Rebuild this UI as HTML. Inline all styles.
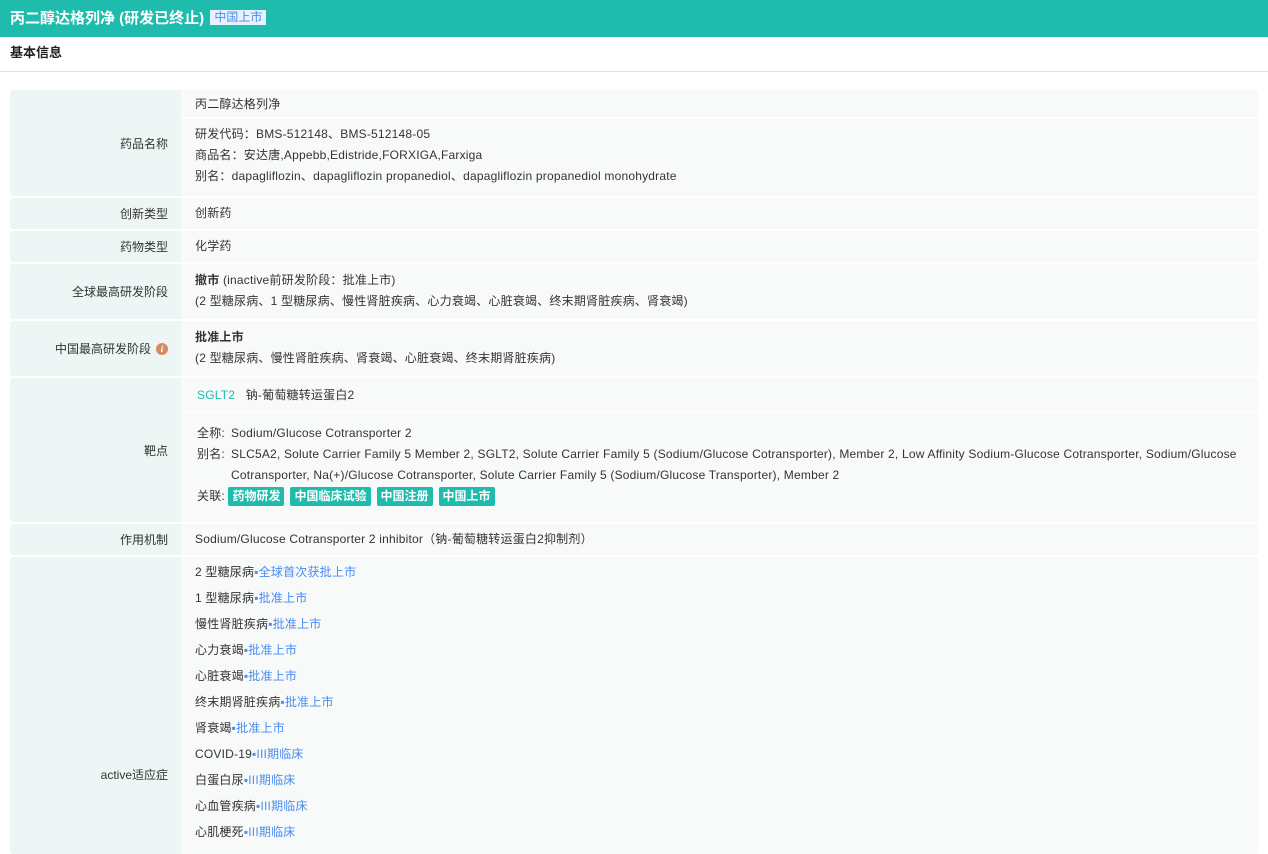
<!DOCTYPE html>
<html><head><meta charset="utf-8"><style>
*{margin:0;padding:0;box-sizing:border-box}
html{height:853px;overflow:hidden}
body{width:1268px;height:853px;overflow:hidden;background:#fff;font-family:"Liberation Sans","Noto Sans CJK SC",sans-serif;font-size:12px;color:#333}
.hd{height:37px;background:#1fbcae;color:#fff;font-weight:bold;font-size:15px;line-height:37px;padding-left:10px}
.hd .tag{display:inline-block;background:#e8f2ff;color:#4a8cf0;font-size:12px;font-weight:normal;line-height:15px;padding:0 4px;vertical-align:2px;margin-left:2px}
.sub{height:35px;line-height:31px;padding-left:10px;font-weight:bold;font-size:13px;color:#222;border-bottom:1px solid #e3e3e3}
.tb{position:absolute;left:10px;top:90px;width:1248px}
.r{display:flex;margin-bottom:2px;border-radius:3px;overflow:hidden}
.l{width:171px;background:#eef5f5;text-align:right;padding-right:13px;display:flex;align-items:center;justify-content:flex-end;color:#333}
.v{flex:1;background:#f8fafa;padding-left:14px;letter-spacing:.2px}
.ln{line-height:21px}
.g{color:#1fbcae}
.b{color:#4a8cf0}
.bt{display:inline-block;background:#1fbcae;color:#fff;font-weight:bold;padding:0 4px;line-height:19px;border-radius:2px;margin-right:6px;letter-spacing:0}
.i{display:inline-block;width:12px;height:12px;border-radius:50%;background:#d98a5c;color:#fff;font-size:9px;font-style:italic;text-align:center;line-height:12px;margin-left:5px;font-family:"Liberation Serif",serif;font-weight:bold}
</style></head><body>
<div class="hd">丙二醇达格列净 (研发已终止) <span class="tag">中国上市</span></div>
<div class="sub">基本信息</div>
<div class="tb">
<div class="r" style="height:106px"><div class="l">药品名称</div><div class="v" style="padding-left:0"><div style="height:29px;line-height:29px;padding-left:14px;border-bottom:2px solid #fff">丙二醇达格列净</div><div style="padding:5px 0 0 14px"><div class="ln">研发代码：BMS-512148、BMS-512148-05</div><div class="ln">商品名：安达唐,Appebb,Edistride,FORXIGA,Farxiga</div><div class="ln">别名：dapagliflozin、dapagliflozin propanediol、dapagliflozin propanediol monohydrate</div></div></div></div>
<div class="r" style="height:31px"><div class="l">创新类型</div><div class="v" style="line-height:31px">创新药</div></div>
<div class="r" style="height:31px"><div class="l">药物类型</div><div class="v" style="line-height:31px">化学药</div></div>
<div class="r" style="height:55px"><div class="l">全球最高研发阶段</div><div class="v" style="padding-top:6px"><div class="ln"><b>撤市</b> (inactive前研发阶段：批准上市)</div><div class="ln">(2 型糖尿病、1 型糖尿病、慢性肾脏疾病、心力衰竭、心脏衰竭、终末期肾脏疾病、肾衰竭)</div></div></div>
<div class="r" style="height:55px"><div class="l">中国最高研发阶段<span class="i">i</span></div><div class="v" style="padding-top:6px"><div class="ln"><b>批准上市</b></div><div class="ln">(2 型糖尿病、慢性肾脏疾病、肾衰竭、心脏衰竭、终末期肾脏疾病)</div></div></div>
<div class="r" style="height:144px"><div class="l">靶点</div><div class="v" style="padding-left:0"><div style="height:35px;line-height:35px;padding-left:16px;border-bottom:1px solid #fff"><span class="g">SGLT2</span>&nbsp;&nbsp; 钠-葡萄糖转运蛋白2</div><div style="padding:10px 20px 0 16px;display:flex"><div style="width:34px;line-height:21px">全称:<br>别名:</div><div style="flex:1;line-height:21px">Sodium/Glucose Cotransporter 2<br>SLC5A2, Solute Carrier Family 5 Member 2, SGLT2, Solute Carrier Family 5 (Sodium/Glucose Cotransporter), Member 2, Low Affinity Sodium-Glucose Cotransporter, Sodium/Glucose Cotransporter, Na(+)/Glucose Cotransporter, Solute Carrier Family 5 (Sodium/Glucose Transporter), Member 2</div></div><div style="padding-left:16px;line-height:21px">关联: <span class="bt">药物研发</span><span class="bt">中国临床试验</span><span class="bt">中国注册</span><span class="bt">中国上市</span></div></div></div>
<div class="r" style="height:31px"><div class="l">作用机制</div><div class="v" style="line-height:31px">Sodium/Glucose Cotransporter 2 inhibitor（钠-葡萄糖转运蛋白2抑制剂）</div></div>
<div class="r" style="height:297px;margin-bottom:0"><div class="l" style="align-items:flex-start;padding-top:209px">active适应症</div><div class="v" style="padding-top:2px;line-height:26px">
<div>2 型糖尿病<span class="b">▪全球首次获批上市</span></div>
<div>1 型糖尿病<span class="b">▪批准上市</span></div>
<div>慢性肾脏疾病<span class="b">▪批准上市</span></div>
<div>心力衰竭<span class="b">▪批准上市</span></div>
<div>心脏衰竭<span class="b">▪批准上市</span></div>
<div>终末期肾脏疾病<span class="b">▪批准上市</span></div>
<div>肾衰竭<span class="b">▪批准上市</span></div>
<div>COVID-19<span class="b">▪III期临床</span></div>
<div>白蛋白尿<span class="b">▪III期临床</span></div>
<div>心血管疾病<span class="b">▪III期临床</span></div>
<div>心肌梗死<span class="b">▪III期临床</span></div>
</div></div>
</div>
</body></html>
